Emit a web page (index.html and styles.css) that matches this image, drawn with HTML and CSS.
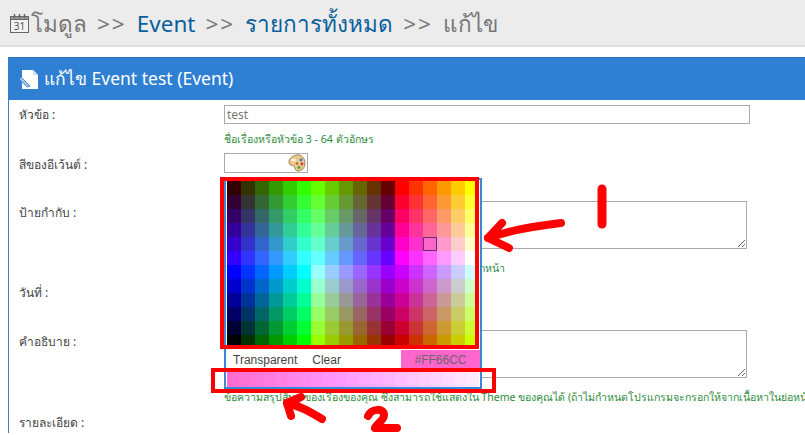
FILE: index.html
```html
<!DOCTYPE html>
<html lang="th">

<head>
    <meta charset="UTF-8">
    <title>แก้ไข Event</title>
    <link rel="stylesheet" href="styles.css">
</head>

<body>
    <div class="titlebar">
        <svg class="cal-icon" width="21" height="21" viewBox="0 0 21 21">
            <rect x="1.5" y="3.5" width="18" height="16" fill="#f2f2f2" stroke="#666"></rect>
            <rect x="1.5" y="3.5" width="18" height="3" fill="#999" stroke="#666"></rect>
            <path d="M5.5 1v4M10.5 1v4M15.5 1v4" stroke="#666" stroke-width="1.5"></path>
            <text x="10.5" y="17" class="cal-num">31</text>
        </svg>
        <h1>โมดูล<span class="sep">&gt;&gt;</span><a>Event</a><span class="sep">&gt;&gt;</span><a>รายการทั้งหมด</a><span class="sep">&gt;&gt;</span>แก้ไข</h1>
    </div>

    <div class="panel">
        <div class="panel-head">
            <svg width="20" height="21" viewBox="0 0 20 21">
                <path d="M2 1h11l5 5v14H2z" fill="#fff"></path>
                <path d="M13 1v5h5" fill="#cfe0f2"></path>
                <path d="M1 8l9 9-3 1-8-8z" fill="#9dc3ea" stroke="#2f80d3" stroke-width="0.8"></path>
            </svg>
            <span>แก้ไข Event test (Event)</span>
        </div>

        <div class="row row-title">
            <label>หัวข้อ :</label>
            <div>
                <input class="text-input" type="text" value="test">
                <div class="hint">ชื่อเรื่องหรือหัวข้อ 3 - 64 ตัวอักษร</div>
            </div>
        </div>

        <div class="row row-color">
            <label>สีของอีเว้นต์ :</label>
            <div class="color-field">
                <svg class="palette-icon" width="18" height="18" viewBox="0 0 18 18">
                    <path d="M8 1c5-1 9 3 9 8 0 5-3 8-7 8-3 0-3-3-4-5-1-1-5 0-5-4 0-4 4-6 7-7z" fill="#e8c98e" stroke="#8a6a3a" stroke-width="0.8"></path>
                    <ellipse cx="5.5" cy="6" rx="2.4" ry="1.6" fill="#fff5dc"></ellipse>
                    <circle cx="13" cy="6" r="1.4" fill="#3c6fd0"></circle>
                    <circle cx="14" cy="10" r="1.4" fill="#d03c3c"></circle>
                    <circle cx="11" cy="13.5" r="1.4" fill="#3ca03c"></circle>
                    <circle cx="9" cy="9.5" r="1.3" fill="#d05a28"></circle>
                </svg>
            </div>
        </div>

        <div class="row row-tags">
            <label>ป้ายกำกับ :</label>
            <div>
                <textarea class="text-area"></textarea>
                <div class="hint">ป้ายกำกับใช้จัดกลุ่มเนื้อหา คั่นแต่ละรายการด้วยจุลภาคทุกหน้า</div>
            </div>
        </div>

        <div class="row row-date">
            <label>วันที่ :</label>
            <div><input class="date-input" type="text"></div>
        </div>

        <div class="row row-desc">
            <label>คำอธิบาย :</label>
            <div>
                <textarea class="text-area"></textarea>
                <div class="hint">ข้อความสรุปสั้นๆ ของเรื่องของคุณ ซึ่งสามารถใช้แสดงใน Theme ของคุณได้ (ถ้าไม่กำหนดโปรแกรมจะกรอกให้จากเนื้อหาในย่อหน้า</div>
            </div>
        </div>

        <div class="row">
            <label>รายละเอียด :</label>
        </div>
    </div>

    <!-- color picker popup -->
    <div class="picker">
        <div class="swatches" id="swatches"></div>
        <div class="picker-bar">
            <span class="picker-btn">Transparent</span>
            <span class="picker-btn">Clear</span>
            <span class="picker-value">#FF66CC</span>
        </div>
        <div class="tints" id="tints"></div>
    </div>

    <!-- red marks drawn on the screenshot -->
    <div class="mark mark-palette"></div>
    <div class="mark mark-tints"></div>
    <svg class="scribble" width="805" height="435" viewBox="0 0 805 435">
        <g fill="none" stroke="#f00" stroke-width="8" stroke-linecap="round" stroke-linejoin="round">
            <path d="M561 223C535 226 510 230 488 238"></path>
            <path d="M502 223L488 238L509 248"></path>
            <path d="M602 189V224" stroke-width="9"></path>
            <path d="M322 419C310 412 300 406 287 403"></path>
            <path d="M301 397L287 403L291 416"></path>
            <path d="M368 416C372 408 384 408 384 415C384 421 376 424 375 428H397"></path>
        </g>
    </svg>

    <script src="script.js"></script>
</body>

</html>
```

FILE: styles.css
```css
html,
body {
    margin: 0;
    height: 435px;
    overflow: hidden;
}

body {
    position: relative;
    background: #fff;
    font-family: Tahoma, "Noto Sans", "DejaVu Sans", sans-serif;
    font-size: 12px;
    color: #444;
}

.titlebar {
    display: flex;
    align-items: center;
    gap: 1px;
    height: 47px;
    padding-left: 9px;
    padding-top: 2px;
    box-sizing: border-box;
    background: #ececec;
    border-bottom: 2px solid #dcdfe2;
}

.cal-num {
    font-size: 10px;
    text-anchor: middle;
    fill: #555;
}

.titlebar h1 {
    margin: 0;
    font-size: 22.5px;
    font-weight: normal;
    color: #777;
    white-space: nowrap;
}

.titlebar a {
    color: #0a5f9e;
}

.sep {
    margin: 0 10px;
    letter-spacing: 2px;
}

.panel {
    margin: 10px 0 0 8px;
    border-left: 1px solid #3a7fc4;
}

.panel-head {
    display: flex;
    align-items: center;
    gap: 4px;
    height: 43px;
    padding-left: 11px;
    background: #2f80d3;
    border-top: 1px solid #2a70b8;
    box-sizing: border-box;
    color: #fff;
    font-size: 17.5px;
}

.row {
    display: grid;
    grid-template-columns: 205px 1fr;
    padding-left: 10px;
}

.row label {
    line-height: 20px;
}

.row-color label,
.row-tags label,
.row-desc label {
    padding-top: 2px;
}

.row-title {
    padding-top: 5px;
    padding-bottom: 5px;
}

.row-color {
    padding-bottom: 26px;
}

.row-tags {
    padding-bottom: 6px;
}

.row-date {
    padding-bottom: 27px;
}

.row-desc {
    padding-bottom: 7px;
}

.text-input {
    display: block;
    width: 526px;
    height: 19px;
    padding: 0 2px;
    box-sizing: border-box;
    border: 1px solid #aaa;
    font: inherit;
    color: #777;
}

.text-area {
    display: block;
    width: 523px;
    height: 48px;
    box-sizing: border-box;
    border: 1px solid #aaa;
    margin: 0;
}

.date-input {
    display: block;
    width: 120px;
    height: 20px;
    box-sizing: border-box;
    border: 1px solid #aaa;
}

.hint {
    height: 18px;
    margin-top: 6px;
    line-height: 18px;
    font-size: 10.6px;
    color: #2e8b3d;
    white-space: nowrap;
}

.text-area + .hint {
    margin-top: 10px;
}

.color-field {
    display: flex;
    justify-content: flex-end;
    align-items: center;
    width: 84px;
    height: 20px;
    padding-right: 1px;
    box-sizing: border-box;
    border: 1px solid #aaa;
}

.picker {
    position: absolute;
    left: 224px;
    top: 178px;
    width: 258px;
    height: 211px;
    padding: 1px 1px 0;
    box-sizing: border-box;
    background: #fff;
    border: 2px solid #3a86d8;
}

.swatches {
    display: grid;
    grid-template-columns: repeat(18, 14px);
    grid-auto-rows: 14px;
}

.swatch.selected {
    box-sizing: border-box;
    border: 1px solid #663366;
}

.picker-bar {
    display: flex;
    align-items: center;
    gap: 15px;
    height: 20px;
    margin-top: 1px;
    padding-left: 6px;
    font-family: "Liberation Sans", sans-serif;
    font-size: 12px;
    color: #444;
}

.picker-value {
    align-self: stretch;
    width: 79px;
    margin-left: auto;
    margin-right: -1px;
    background: #ff66cc;
    text-align: center;
    line-height: 20px;
    color: #666;
}

.tints {
    display: flex;
    height: 15px;
    margin-top: 2px;
}

.tints div {
    flex: 1;
}

.mark {
    position: absolute;
    box-sizing: border-box;
    border: 4px solid #f00;
}

.mark-palette {
    left: 220px;
    top: 177px;
    width: 259px;
    height: 172px;
}

.mark-tints {
    left: 211px;
    top: 368px;
    width: 285px;
    height: 25px;
}

.scribble {
    position: absolute;
    left: 0;
    top: 0;
}
```

FILE: script.js
```js
var steps = ["00", "33", "66", "99", "CC", "FF"];
var swatches = document.getElementById("swatches");

// 216 web colours, in two stacks of six rows
function addSwatch(r, g, b) {
    var color = "#" + r + g + b;
    var cell = document.createElement("div");
    cell.className = "swatch";
    cell.style.background = color;
    if (color === "#FF66CC") {
        cell.className = "swatch selected";
    }
    swatches.appendChild(cell);
}

function addRow(left, mid, right, b) {
    var i;
    for (i = 0; i < 6; i++) addSwatch(left, steps[i], b);
    for (i = 5; i >= 0; i--) addSwatch(mid, steps[i], b);
    for (i = 0; i < 6; i++) addSwatch(right, steps[i], b);
}

steps.forEach(function (b) {
    addRow("33", "66", "FF", b);
});
steps.slice().reverse().forEach(function (b) {
    addRow("00", "99", "CC", b);
});

// tints of the chosen colour
var tints = document.getElementById("tints");
var count = 21;
for (var n = 0; n < count; n++) {
    var t = n / (count - 1);
    var g = t < 0.45 ? 108 + (153 - 108) * t / 0.45 : 153 + (234 - 153) * (t - 0.45) / 0.55;
    var b = t < 0.45 ? 208 + (255 - 208) * t / 0.45 : 255;
    var cell = document.createElement("div");
    cell.style.background = "rgb(255," + Math.round(g) + "," + Math.round(b) + ")";
    tints.appendChild(cell);
}
```
